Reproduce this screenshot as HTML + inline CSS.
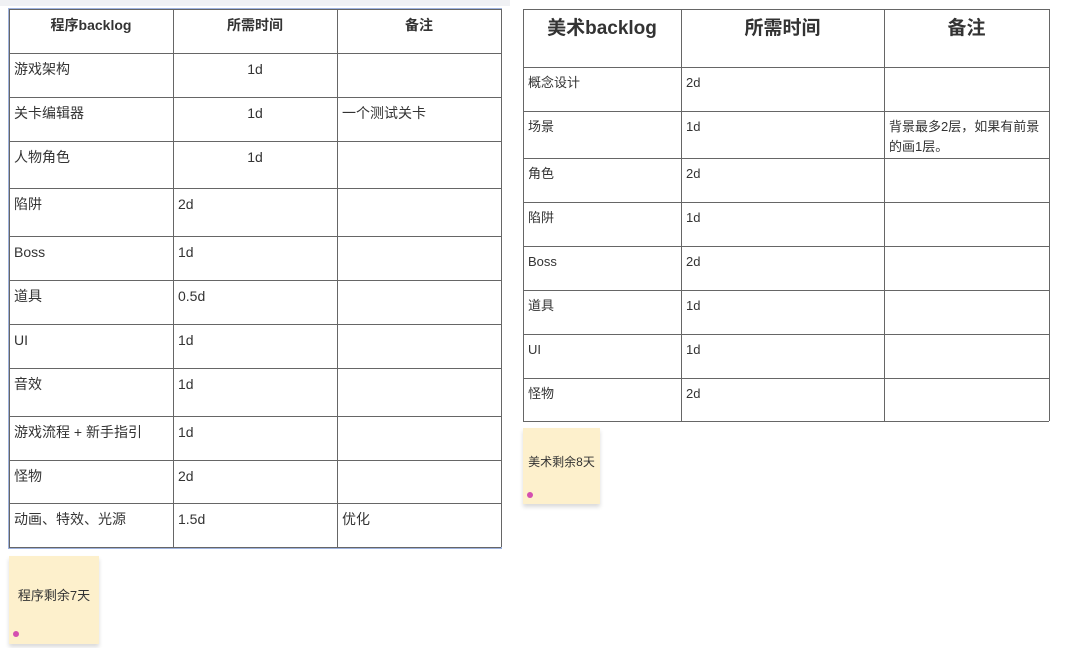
<!DOCTYPE html>
<html><head><meta charset="utf-8"><style>
body{margin:0;width:1080px;height:648px;background:#fff;position:relative;overflow:hidden;font-family:"Liberation Sans","Noto Sans CJK SC",sans-serif;color:#333;}
.c{position:absolute;box-sizing:border-box;font-size:13px;line-height:20px;padding:6px 5px;}
.h{font-weight:bold;text-align:center;font-size:14px;}
.ln{position:absolute;background:#666;}
.note{position:absolute;background:#fdf0cc;font-size:13px;color:#333;box-shadow:0 3px 4px rgba(0,0,0,.15);}
.note .t{position:absolute;left:0;right:0;text-align:center;}
.note .d{position:absolute;left:4px;width:6px;height:6px;border-radius:50%;background:#d44fb0;}
</style></head><body>
<div style="position:absolute;left:0;top:0;width:510px;height:6px;background:#f0f1f4"></div>
<div style="position:absolute;left:8px;top:8px;width:494px;height:541px;border:1px solid #9fb3de;box-sizing:border-box"></div>
<div id="L"></div><div id="R"></div>
<div class="note" style="left:523px;top:428px;width:77px;height:76px"><div class="t" style="top:25px;font-size:12px">美术剩余8天</div><div class="d" style="top:64px"></div></div>
<div class="note" style="left:9px;top:556px;width:90px;height:88px"><div class="t" style="top:29px">程序剩余7天</div><div class="d" style="top:75px"></div></div>
<script>
function tbl(x,cols,rows,data,hs,fsz){
 let h='';const X=[x,...cols];
 for(let r=0;r<rows.length-1;r++){
  for(let c=0;c<3;c++){
   const v=data[r][c];const cls=r==0?'c h':'c';
   const ctr=(r==0||(hs&&c==1&&r<4))?'text-align:center;':'';
   const fs=r==0?(x>500?'font-size:19px;padding-top:10px;':''):`font-size:${fsz}px;`;
   h+=`<div class="${cls}" style="left:${X[c]}px;top:${rows[r]}px;width:${X[c+1]-X[c]}px;${ctr}${fs}">${v}</div>`;
  }
 }
 rows.forEach(y=>h+=`<div class="ln" style="left:${x}px;top:${y}px;width:${X[3]-x}px;height:1px"></div>`);
 X.forEach(xx=>h+=`<div class="ln" style="left:${xx}px;top:${rows[0]}px;width:1px;height:${rows[rows.length-1]-rows[0]}px"></div>`);
 return h;
}
document.getElementById('L').innerHTML=tbl(9,[173,337,501],[9,53,97,141,188,236,280,324,368,416,460,503,547],
[['程序backlog','所需时间','备注'],['游戏架构','1d',''],['关卡编辑器','1d','一个测试关卡'],['人物角色','1d',''],['陷阱','2d',''],['Boss','1d',''],['道具','0.5d',''],['UI','1d',''],['音效','1d',''],['游戏流程 + 新手指引','1d',''],['怪物','2d',''],['动画、特效、光源','1.5d','优化']],true,14);
document.getElementById('R').innerHTML=tbl(523,[681,884,1049],[9,67,111,158,202,246,290,334,378,421],
[['美术backlog','所需时间','备注'],['概念设计','2d',''],['场景','1d','背景最多2层，如果有前景的画1层。'],['角色','2d',''],['陷阱','1d',''],['Boss','2d',''],['道具','1d',''],['UI','1d',''],['怪物','2d','']],false,13);
</script>
</body></html>
